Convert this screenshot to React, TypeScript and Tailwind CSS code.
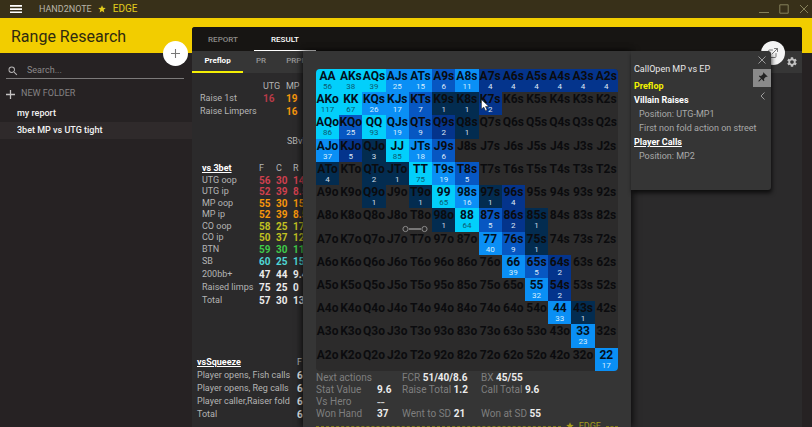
import React, { useState } from "react";
import { FiExternalLink } from "react-icons/fi";
import { MdSearch, MdSettings, MdPushPin } from "react-icons/md";

const ranks = ["A", "K", "Q", "J", "T", "9", "8", "7", "6", "5", "4", "3", "2"];

// tone of a cell: c = cyan, b = bright, m = medium, d = deep, n = navy
const tones: Record<string, string> = {
  c: "bg-[#02cffb] text-[#0c5a70]",
  b: "bg-[#0a8ff5] text-[#d5edfc]",
  m: "bg-[#0757c2] text-[#dfeaf8]",
  d: "bg-[#04348c] text-[#dfe7f5]",
  n: "bg-[#032c50] text-[#d0dde6]",
};

const hands: Record<string, [number, string]> = {
  AA: [56, "c"], AKs: [38, "c"], AQs: [39, "c"], AJs: [25, "b"], ATs: [15, "b"], A9s: [6, "m"], A8s: [11, "b"],
  A7s: [4, "d"], A6s: [4, "d"], A5s: [4, "d"], A4s: [4, "d"], A3s: [4, "d"], A2s: [4, "d"],
  AKo: [117, "c"], KK: [67, "c"], KQs: [26, "b"], KJs: [17, "b"], KTs: [7, "m"], K9s: [1, "n"], K8s: [1, "n"], K7s: [2, "d"],
  AQo: [86, "c"], KQo: [25, "m"], QQ: [93, "c"], QJs: [19, "b"], QTs: [9, "m"], Q9s: [2, "d"], Q8s: [1, "n"],
  AJo: [37, "b"], KJo: [5, "d"], QJo: [3, "n"], JJ: [85, "c"], JTs: [18, "b"], J9s: [6, "m"],
  ATo: [4, "n"], QTo: [2, "n"], JTo: [1, "n"], TT: [75, "c"], T9s: [19, "b"], T8s: [5, "m"],
  Q9o: [1, "n"], T9o: [1, "n"], "99": [65, "c"], "98s": [16, "b"], "97s": [1, "n"], "96s": [4, "d"],
  "98o": [1, "n"], "88": [64, "c"], "87s": [5, "m"], "86s": [2, "d"], "85s": [1, "n"],
  "77": [40, "b"], "76s": [9, "m"], "75s": [1, "n"],
  "66": [39, "b"], "65s": [5, "m"], "64s": [2, "d"],
  "55": [32, "b"], "54s": [2, "d"],
  "44": [33, "b"], "43s": [1, "n"],
  "33": [23, "b"],
  "22": [17, "b"],
};

const handName = (row: number, col: number) => {
  if (row === col) return ranks[row] + ranks[row];
  return col > row ? ranks[row] + ranks[col] + "s" : ranks[col] + ranks[row] + "o";
};

const vs3bet = [
  { name: "UTG oop", values: ["56", "30", "14"], color: "text-[#d0404e]" },
  { name: "UTG ip", values: ["52", "39", "8.5"], color: "text-[#d0404e]" },
  { name: "MP oop", values: ["55", "30", "15"], color: "text-[#f7960c]" },
  { name: "MP ip", values: ["52", "39", "8.5"], color: "text-[#f7960c]" },
  { name: "CO oop", values: ["58", "25", "17"], color: "text-[#c2c022]" },
  { name: "CO ip", values: ["50", "37", "12"], color: "text-[#c2c022]" },
  { name: "BTN", values: ["59", "30", "11"], color: "text-[#3fcb4a]" },
];

const vs3betTotals = [
  { name: "SB", values: ["60", "25", "15"], color: "text-[#4fd6d6]" },
  { name: "200bb+", values: ["47", "44", "9.4"], color: "text-[#ececec]" },
  { name: "Raised limps", values: ["75", "25", "0"], color: "text-[#ececec]" },
  { name: "Total", values: ["57", "30", "13"], color: "text-[#ececec]" },
];

const squeeze = ["Player opens, Fish calls", "Player opens, Reg calls", "Player caller,Raiser fold", "Total"];

const Star = () => (
  <svg viewBox="0 0 24 24" className="h-[8px] w-[8px] fill-current" aria-hidden="true">
    <path d="M12 1l3.2 7.4 8 .7-6.1 5.3 1.9 7.9-7-4.2-7 4.2 1.9-7.9L.8 9.1l8-.7z" />
  </svg>
);

const TitleBar = () => (
  <header className="flex h-[18px] shrink-0 items-center bg-[#383019] pr-[3px] pl-[10px]">
    <button aria-label="Menu" className="text-white">
      <svg viewBox="0 0 12 8" className="h-[8px] w-[12px] fill-current">
        <path d="M0 0h12v1.7H0zM0 3.2h12v1.7H0zM0 6.4h12v1.6H0z" />
      </svg>
    </button>
    <span className="ml-[17px] text-[9px] leading-[16px] text-[#b9b5a8]">HAND2NOTE</span>
    <span className="ml-[6px] flex items-center gap-[7px] text-[10px] leading-[16px] text-[#e2cc1c]">
      <Star />
      EDGE
    </span>
    <div className="ml-auto flex items-center gap-[10px] text-[#85805a]">
      <button aria-label="Minimize">
        <svg viewBox="0 0 10 10" className="h-[10px] w-[10px]" stroke="currentColor" fill="none">
          <path d="M0 8.5h10" />
        </svg>
      </button>
      <button aria-label="Maximize">
        <svg viewBox="0 0 10 10" className="h-[10px] w-[10px]" stroke="currentColor" fill="none">
          <path d="M.8 .8h8.4v8.4H.8z" />
        </svg>
      </button>
      <button aria-label="Close">
        <svg viewBox="0 0 10 10" className="h-[10px] w-[10px]" stroke="currentColor" fill="none">
          <path d="M1 1l8 8M9 1l-8 8" />
        </svg>
      </button>
    </div>
  </header>
);

const Sidebar = () => (
  <aside className="relative w-[192px] shrink-0 text-[9px]">
    <h1 className="h-[35px] pl-[11px] text-[16px] leading-[38px] text-[#2f2a10]">Range Research</h1>
    <button
      aria-label="Add report"
      className="absolute top-[23px] right-[4px] flex h-[25px] w-[25px] items-center justify-center rounded-full bg-white text-[#777]"
    >
      <svg viewBox="0 0 10 10" className="h-[9px] w-[9px]" stroke="currentColor" strokeWidth="1.2">
        <path d="M5 0v10M0 5h10" />
      </svg>
    </button>
    <label className="mt-[10px] mr-[8px] ml-[6px] flex h-[16px] items-center gap-[8px] border-b border-[#7c7a7a] pt-px pl-px">
      <MdSearch className="h-[12px] w-[12px] text-[#b5b3b3]" />
      <input
        type="text"
        aria-label="Search"
        placeholder="Search..."
        className="min-w-0 flex-1 bg-transparent text-[9px] text-[#ddd] outline-none placeholder:text-[#8b8989]"
      />
    </label>
    <button className="mt-[6px] ml-[6px] flex h-[18px] items-center gap-[6px] text-[#858383]">
      <svg viewBox="0 0 10 10" className="h-[9px] w-[9px]" stroke="#c4c2c2" strokeWidth="1.4">
        <path d="M5 0v10M0 5h10" />
      </svg>
      NEW FOLDER
    </button>
    <nav className="mt-[2px] font-medium text-[#f2f2f2]">
      <a href="#my-report" className="block pl-[17px] leading-[17px]">my report</a>
      <a href="#3bet" className="block bg-[#2f2a2b] pl-[17px] leading-[17px]">3bet MP vs UTG tight</a>
    </nav>
  </aside>
);

const StatRow = ({ row, height }) => (
  <tr className={height}>
    <th scope="row" className="p-0 text-left font-normal text-[#b4b4b4]">{row.name}</th>
    {row.values.map((value, i) => (
      <td key={i} className={`p-0 text-[10px] font-bold ${row.color}`}>{value}</td>
    ))}
  </tr>
);

const Stats = () => (
  <div className="pt-[7px] text-[9px] leading-[11px] whitespace-nowrap text-[#b4b4b4]">
    <table className="ml-[8px] w-[110px] table-fixed text-left">
      <thead>
        <tr className="h-[12px] text-[9px]">
          <th className="w-[63px] p-0"></th>
          <th className="w-[23px] p-0 font-normal">UTG</th>
          <th className="p-0 font-normal">MP</th>
        </tr>
      </thead>
      <tbody>
        <tr className="h-[13px]">
          <th scope="row" className="p-0 font-normal">Raise 1st</th>
          <td className="p-0 text-[10px] font-bold text-[#b83a48]">16</td>
          <td className="p-0 text-[10px] font-bold text-[#f7960c]">19</td>
        </tr>
        <tr className="h-[13px]">
          <th scope="row" className="p-0 font-normal">Raise Limpers</th>
          <td className="p-0"></td>
          <td className="p-0 text-[10px] font-bold text-[#f7960c]">16</td>
        </tr>
      </tbody>
    </table>
    <p className="mt-[18px] ml-[95px]">SBvBB</p>
    <table className="mt-[15px] ml-[10px] w-[110px] table-fixed text-left">
      <thead>
        <tr className="h-[12px]">
          <th className="w-[57px] p-0 font-bold text-white underline">vs 3bet</th>
          <th className="w-[17px] p-0 font-normal">F</th>
          <th className="w-[17px] p-0 font-normal">C</th>
          <th className="p-0 font-normal">R</th>
        </tr>
      </thead>
      <tbody>
        {vs3bet.map((row, i) => (
          <StatRow key={row.name} row={row} height={i % 2 ? "h-[11px]" : "h-[12px]"} />
        ))}
        {vs3betTotals.map((row) => (
          <StatRow key={row.name} row={row} height="h-[13px]" />
        ))}
      </tbody>
    </table>
    <table className="mt-[49px] ml-[5px] w-[120px] table-fixed text-left">
      <thead>
        <tr className="h-[13px]">
          <th className="w-[100px] p-0 font-bold text-white underline">vsSqueeze</th>
          <th className="p-0 font-normal">F</th>
        </tr>
      </thead>
      <tbody>
        {squeeze.map((name) => (
          <tr key={name} className="h-[13px]">
            <th scope="row" className="p-0 font-normal">{name}</th>
            <td className="p-0 text-[10px] font-bold text-[#ececec]">6</td>
          </tr>
        ))}
      </tbody>
    </table>
  </div>
);

const HandMatrix = () => (
  <div className="relative overflow-hidden rounded-[4px]">
    <table className="h-[302px] w-full table-fixed bg-[#2c2b2b]">
      <tbody>
        {ranks.map((_, row) => (
          <tr key={row}>
            {ranks.map((_, col) => {
              const name = handName(row, col);
              const hand = hands[name];
              return (
                <td key={col} className={`p-0 text-center align-top ${hand ? tones[hand[1]] : ""}`}>
                  <div className={`flex justify-center text-[12px] leading-[15px] font-bold whitespace-nowrap ${hand && "cb".includes(hand[1]) ? "text-[#02101c]" : "text-[#0b0b0e]"}`}>
                    {name}
                  </div>
                  <div className="h-[7px] text-[8px] leading-[6px]">{hand?.[0]}</div>
                </td>
              );
            })}
          </tr>
        ))}
      </tbody>
    </table>
    {/* range handle */}
    <svg viewBox="0 0 26 8" className="absolute top-[156px] left-[86px] h-[8px] w-[26px]" fill="none" stroke="#8d8d8d">
      <circle cx="3.5" cy="4" r="2.6" />
      <circle cx="22.5" cy="4" r="2.6" />
      <path d="M7 4h12" stroke="#c4c4c4" />
    </svg>
    <svg viewBox="0 0 10 14" className="absolute top-[30px] left-[165px] h-[13px] w-[9px]">
      <path d="M.5 .5v10.5l2.6-2.2 1.9 4 1.8-.9-1.8-3.8h3.7z" fill="#fff" stroke="#222" strokeWidth=".6" />
    </svg>
  </div>
);

const Value = ({ children }) => <b className="font-bold text-[#ececec]">{children}</b>;

const HandPanel = () => (
  <section className="relative h-full w-[328px] shrink-0 bg-[#353535] px-[13px] pt-[18px] shadow-[-2px_0_6px_rgba(0,0,0,0.6),3px_0_6px_rgba(0,0,0,0.5)]">
    <HandMatrix />
    <div className="mt-px grid grid-cols-[61px_25px_79px_1fr] text-[10px] leading-[12px] whitespace-nowrap text-[#7e7e7e]">
      <span className="col-span-2">Next actions</span>
      <span>FCR <Value>51/40/8.6</Value></span>
      <span>BX <Value>45/55</Value></span>
      <span>Stat Value</span>
      <Value>9.6</Value>
      <span>Raise Total <Value>1.2</Value></span>
      <span>Call Total <Value>9.6</Value></span>
      <span>Vs Hero</span>
      <span className="col-span-3 text-[14px] text-[#c9c9c9]">--</span>
      <span>Won Hand</span>
      <Value>37</Value>
      <span>Went to SD <Value>21</Value></span>
      <span>Won at SD <Value>55</Value></span>
    </div>
    <div className="flex items-center gap-[5px] text-[9px] leading-[12px] text-[#a39b1b]">
      <span className="flex-1 border-t border-dashed border-[#7f7a16]"></span>
      <Star />
      EDGE
      <span className="w-[12px] border-t border-dashed border-[#7f7a16]"></span>
    </div>
  </section>
);

const FilterPanel = () => (
  <section className="relative flex h-[139px] w-[140px] shrink-0 rounded-r-[3px] bg-[#353535] pt-[10px] pl-[3px] text-[9px] leading-[14px] whitespace-nowrap text-[#a9a9a9] shadow-[1px_3px_4px_rgba(0,0,0,0.7)]">
    <div>
      <h2 className="mb-[2px] leading-[16px] text-[#e8e8e8]">CallOpen MP vs EP</h2>
      <h3 className="font-bold text-[#f2f200]">Preflop</h3>
      <h3 className="font-bold text-white">Villain Raises</h3>
      <p className="pl-[5px]">Position: UTG-MP1</p>
      <p className="pl-[5px]">First non fold action on street</p>
      <h3 className="font-bold text-white underline">Player Calls</h3>
      <p className="pl-[5px]">Position: MP2</p>
    </div>
    <div className="absolute top-0 right-0 flex w-[18px] flex-col items-center text-[#9b9b9b]">
      <button aria-label="Close" className="flex h-[18px] items-center">
        <svg viewBox="0 0 8 8" className="h-[8px] w-[8px]" stroke="currentColor">
          <path d="M.5 .5l7 7M7.500 .5l-7 7" />
        </svg>
      </button>
      <button aria-label="Pin" className="flex h-[18px] w-[18px] items-center justify-center bg-[#8a8a8a] text-[#222]">
        <MdPushPin className="h-[12px] w-[12px] rotate-45" />
      </button>
      <button aria-label="Collapse" className="flex h-[18px] items-center">
        <svg viewBox="0 0 5 8" className="h-[8px] w-[5px]" stroke="currentColor" fill="none">
          <path d="M4.500 .5L1 4l3.500 3.500" />
        </svg>
      </button>
    </div>
  </section>
);

const App = () => {
  const [tab, setTab] = useState("RESULT");

  return (
    <div className="flex h-screen flex-col overflow-hidden bg-[#262223] font-['Roboto',sans-serif]">
      <TitleBar />
      <div className="flex min-h-0 flex-1 bg-[linear-gradient(#f2cd00_35px,#262223_35px)]">
        <Sidebar />
        <main className="min-w-0 flex-1 pt-[9px] pr-[10px]">
          <div className="relative h-full rounded-t-[3px] bg-[#2b2a2b]">
            <div className="flex h-[24px] rounded-t-[3px] bg-[#171513] text-[8px] font-medium">
              {["REPORT", "RESULT"].map((name) => (
                <button
                  key={name}
                  onClick={() => setTab(name)}
                  className={`w-[62px] border-b pt-[2px] ${tab === name ? "border-white text-white" : "border-transparent text-[#8d8b8a]"}`}
                >
                  {name}
                </button>
              ))}
            </div>
            <div className="flex h-[22px] items-stretch bg-[#363636] text-[8px] font-medium text-[#969696]">
              <button className="w-[51px] border-b-2 border-[#f4ef05] font-bold text-white">Preflop</button>
              <button className="w-[36px] border-b-2 border-transparent">PR</button>
              <button className="w-[39px] border-b-2 border-transparent">PRPFR</button>
              <button aria-label="Settings" className="mr-[4px] ml-auto text-[#c2c2c2]">
                <MdSettings className="h-[12px] w-[12px]" />
              </button>
            </div>
            <Stats />
            <button
              aria-label="Open in new window"
              className="absolute top-[14px] right-[17px] flex h-[24px] w-[24px] items-center justify-center rounded-full bg-[#f4f4f4] text-[#777]"
            >
              <FiExternalLink className="h-[12px] w-[12px]" />
            </button>
            <div className="absolute top-[24px] bottom-0 left-[111px] flex items-start">
              <HandPanel />
              <FilterPanel />
            </div>
          </div>
        </main>
      </div>
    </div>
  );
};

export default App;
